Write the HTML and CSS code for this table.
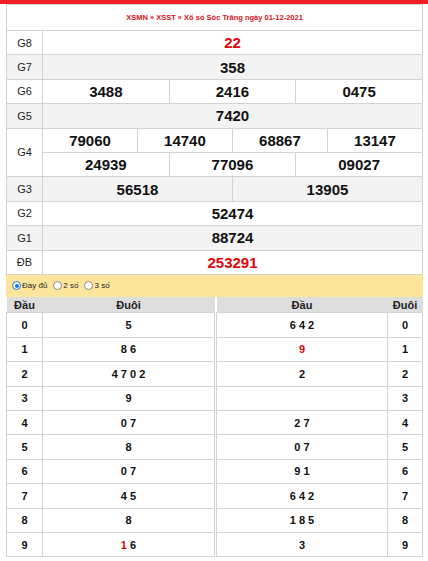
FILE: index.html
```html
<!DOCTYPE html>
<html lang="vi">
<head>
<meta charset="utf-8">
<title>XSST 01-12-2021</title>
<link rel="stylesheet" href="styles.css">
</head>
<body>
<div class="topbar"></div>
<div class="wrap">
  <table class="kq">
    <colgroup>
      <col class="c-lbl">
      <col><col><col><col><col><col><col><col><col><col><col><col>
    </colgroup>
    <tr class="title-row"><td colspan="13" class="title">XSMN » XSST » Xổ số Sóc Trăng ngày 01-12-2021</td></tr>
    <tr><td class="lbl">G8</td><td colspan="12" class="num red">22</td></tr>
    <tr class="alt"><td class="lbl">G7</td><td colspan="12" class="num">358</td></tr>
    <tr><td class="lbl">G6</td><td colspan="4" class="num">3488</td><td colspan="4" class="num">2416</td><td colspan="4" class="num">0475</td></tr>
    <tr class="alt"><td class="lbl">G5</td><td colspan="12" class="num">7420</td></tr>
    <tr><td class="lbl" rowspan="2">G4</td><td colspan="3" class="num">79060</td><td colspan="3" class="num">14740</td><td colspan="3" class="num">68867</td><td colspan="3" class="num">13147</td></tr>
    <tr><td colspan="4" class="num">24939</td><td colspan="4" class="num">77096</td><td colspan="4" class="num">09027</td></tr>
    <tr class="alt"><td class="lbl">G3</td><td colspan="6" class="num">56518</td><td colspan="6" class="num">13905</td></tr>
    <tr><td class="lbl">G2</td><td colspan="12" class="num">52474</td></tr>
    <tr class="alt"><td class="lbl">G1</td><td colspan="12" class="num">88724</td></tr>
    <tr><td class="lbl">ĐB</td><td colspan="12" class="num red">253291</td></tr>
  </table>

  <div class="opts">
    <span class="opt"><span class="radio on"></span>Đầy đủ</span>
    <span class="opt"><span class="radio"></span>2 số</span>
    <span class="opt"><span class="radio"></span>3 số</span>
  </div>

  <div class="loto">
    <table class="lt left">
      <colgroup><col class="c-dau"><col></colgroup>
      <tr class="hd"><th>Đầu</th><th>Đuôi</th></tr>
      <tr><td>0</td><td>5</td></tr>
      <tr><td>1</td><td>8 6</td></tr>
      <tr><td>2</td><td>4 7 0 2</td></tr>
      <tr><td>3</td><td>9</td></tr>
      <tr><td>4</td><td>0 7</td></tr>
      <tr><td>5</td><td>8</td></tr>
      <tr><td>6</td><td>0 7</td></tr>
      <tr><td>7</td><td>4 5</td></tr>
      <tr><td>8</td><td>8</td></tr>
      <tr><td>9</td><td><span class="red">1</span> 6</td></tr>
    </table>
    <table class="lt right">
      <colgroup><col><col class="c-duoi"></colgroup>
      <tr class="hd"><th>Đầu</th><th>Đuôi</th></tr>
      <tr><td>6 4 2</td><td>0</td></tr>
      <tr><td><span class="red">9</span></td><td>1</td></tr>
      <tr><td>2</td><td>2</td></tr>
      <tr><td></td><td>3</td></tr>
      <tr><td>2 7</td><td>4</td></tr>
      <tr><td>0 7</td><td>5</td></tr>
      <tr><td>9 1</td><td>6</td></tr>
      <tr><td>6 4 2</td><td>7</td></tr>
      <tr><td>1 8 5</td><td>8</td></tr>
      <tr><td>3</td><td>9</td></tr>
    </table>
  </div>
</div>
</body>
</html>
```

FILE: styles.css
```css
* { box-sizing: border-box; }
html, body { margin: 0; padding: 0; background: #fff; }
body { font-family: "Liberation Sans", Arial, sans-serif; color: #111; }

.topbar { height: 4px; background: #ef1d25; }

.wrap { margin: 0 5px 0 6px; }

.kq {
  width: 100%;
  border-collapse: collapse;
  table-layout: fixed;
}
.kq .c-lbl { width: 36px; }
.kq td {
  border: 1px solid #d3d3d3;
  height: 24.4px;
  padding: 0;
  text-align: center;
  vertical-align: middle;
}
.kq .title-row td { height: 26px; }
.kq .title {
  color: #d7141b;
  font-size: 7.5px;
  font-weight: bold;
}
.kq .lbl {
  font-size: 11px;
  color: #222;
}
.kq .alt td { background: #f3f3f3; }
.kq .num {
  font-size: 15px;
  font-weight: bold;
  color: #111;
}
.kq .num.red { color: #e0040b; }

.opts {
  height: 22px;
  background: #fee59c;
  display: flex;
  align-items: center;
  padding-left: 6px;
  gap: 6px;
  font-size: 8px;
  color: #222;
}
.opt { display: inline-flex; align-items: center; gap: 1px; }
.radio {
  width: 9px;
  height: 9px;
  border-radius: 50%;
  border: 1px solid #8a8a8a;
  background: #fff;
  display: inline-block;
  position: relative;
}
.radio.on { border-color: #1a73e8; }
.radio.on::after {
  content: "";
  position: absolute;
  left: 1.5px; top: 1.5px;
  width: 4px; height: 4px;
  border-radius: 50%;
  background: #1a73e8;
}

.loto { display: flex; gap: 1px; }
.lt {
  border-collapse: collapse;
  table-layout: fixed;
  width: 209px;
}
.lt.right { width: 207px; }
.lt .c-dau { width: 36px; }
.lt .c-duoi { width: 35px; }
.lt th {
  background: #dedede;
  height: 16px;
  font-size: 11px;
  font-weight: bold;
  color: #222;
  padding: 0;
  text-align: center;
}
.lt td {
  border: 1px solid #d3d3d3;
  height: 24.4px;
  padding: 0;
  text-align: center;
  font-size: 11px;
  font-weight: bold;
  color: #111;
}
.red { color: #e0040b; }
```
